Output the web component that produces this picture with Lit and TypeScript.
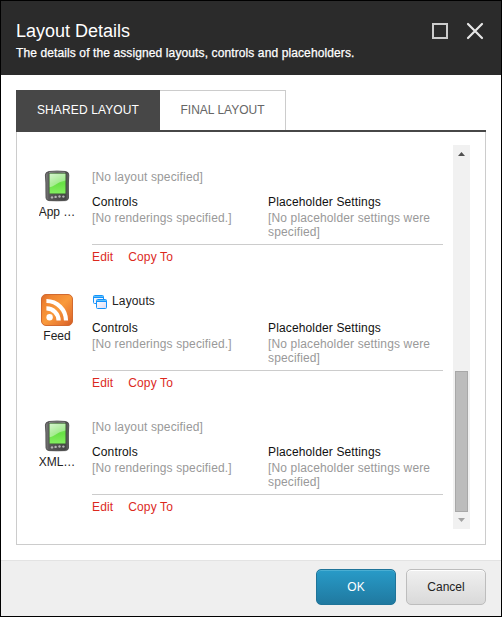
import { LitElement, html, css } from "lit";
import { customElement, property } from "lit/decorators.js";

type Device = { name: string; icon: "pda" | "feed"; layout?: string };

const devices: Device[] = [
  { name: "App …", icon: "pda" },
  { name: "Feed", icon: "feed", layout: "Layouts" },
  { name: "XML…", icon: "pda" },
];

const pdaIcon = html`<svg width="32" height="32" viewBox="0 0 32 32">
  <defs>
    <linearGradient id="body" x1="0" y1="0" x2="1" y2="0">
      <stop offset="0" stop-color="#858585" /><stop offset=".15" stop-color="#5a5a5a" />
      <stop offset=".85" stop-color="#444" /><stop offset="1" stop-color="#6a6a6a" />
    </linearGradient>
    <linearGradient id="screen" x1="0" y1="0" x2="0" y2="1">
      <stop offset="0" stop-color="#86e070" /><stop offset=".5" stop-color="#68e045" /><stop offset="1" stop-color="#84f060" />
    </linearGradient>
    <linearGradient id="shine" x1="0" y1="0" x2="1" y2="1">
      <stop offset="0" stop-color="#fff" stop-opacity=".65" /><stop offset="1" stop-color="#fff" stop-opacity=".2" />
    </linearGradient>
  </defs>
  <path d="M8 1.500Q16 .6 24.500 1.500Q28 2 27.800 5Q27.200 13 27.400 21L27.500 28Q27.300 30.400 24.500 30.600Q16 31 8 30.600Q5.300 30.400 5 28L4.900 21Q5.100 13 4.400 5Q4.400 2 8 1.500Z" fill="url(#body)" stroke="#3c3c3c" stroke-width=".8" />
  <path d="M8 2.400Q16 1.500 24.300 2.400" fill="none" stroke="#a0a0a0" stroke-width=".8" />
  <rect x="8.400" y="3.400" width="16.300" height="20.300" rx="1" fill="url(#screen)" stroke="#4a7c3c" stroke-width=".6" />
  <path d="M8.700 3.700H24.400V10.500Q18 11.500 14 15Q11 17 8.700 17.200Z" fill="url(#shine)" />
  <g fill="#b4b4b4">
    <circle cx="11" cy="27.400" r="1.200" /><circle cx="14.600" cy="26.900" r="1.200" />
    <circle cx="18.500" cy="26.500" r="1.200" /><circle cx="22.400" cy="26.600" r="1.200" />
  </g>
</svg>`;

const feedIcon = html`<svg width="32" height="32" viewBox="0 0 32 32">
  <defs>
    <linearGradient id="feed" x1="0" y1="0" x2="1" y2="1">
      <stop offset="0" stop-color="#d9692a" /><stop offset=".18" stop-color="#ef8432" />
      <stop offset=".5" stop-color="#f99a3c" /><stop offset=".82" stop-color="#e67530" /><stop offset="1" stop-color="#cf5a24" />
    </linearGradient>
  </defs>
  <rect x=".5" y=".5" width="31" height="31" rx="4.500" fill="url(#feed)" stroke="#d26a30" />
  <circle cx="8.600" cy="23.300" r="3.200" fill="#fff" />
  <path d="M5.400 14.400A12.200 12.200 0 0 1 17.600 26.600M5.400 7A19.600 19.600 0 0 1 25 26.600" fill="none" stroke="#fff" stroke-width="4.200" />
</svg>`;

const layoutsIcon = html`<svg width="16" height="16" viewBox="0 0 16 16">
  <defs>
    <linearGradient id="pane" x1="0" y1="0" x2="1" y2="1">
      <stop offset="0" stop-color="#fff" /><stop offset="1" stop-color="#dedcf4" />
    </linearGradient>
  </defs>
  <rect x="1.500" y="1.500" width="10" height="8" rx="1" fill="#f4f4fc" stroke="#1593fb" />
  <path d="M2 2.500H11" stroke="#5cc2fb" />
  <path d="M2 3.500H11" stroke="#1593fb" />
  <rect x="4.500" y="5.500" width="10" height="9" rx="1" fill="url(#pane)" stroke="#1593fb" />
  <path d="M5 6.500H14" stroke="#5cc2fb" />
  <path d="M5 7.500H14" stroke="#1593fb" />
</svg>`;

@customElement("device-row")
class DeviceRow extends LitElement {
  @property({ attribute: false }) device!: Device;

  static styles = css`
    :host { display: flex; padding-bottom: 30px; line-height: 14px; }
    svg { display: block; }
    .device { width: 36px; margin-right: 17px; display: flex; flex-direction: column; align-items: center; gap: 3px; white-space: nowrap; }
    .name { color: #222; letter-spacing: 0; }
    .details { width: 351px; }
    .layout { display: flex; align-items: flex-start; gap: 4px; margin-bottom: 11px; }
    .named { height: 16px; color: #222; }
    .muted { color: #999; }
    .columns { display: grid; grid-template-columns: 176px 175px; height: 49px; border-bottom: 1px solid #ccc; }
    .heading { color: #111; margin-bottom: 2px; }
    .actions { display: flex; gap: 15px; padding-top: 5px; color: #dc291e; }
  `;

  render() {
    const d = this.device;
    return html`
      <div class="device">
        ${d.icon === "feed" ? feedIcon : pdaIcon}
        <span class="name">${d.name}</span>
      </div>
      <div class="details">
        ${d.layout
          ? html`<div class="layout named">${layoutsIcon}<span>${d.layout}</span></div>`
          : html`<div class="layout muted">[No layout specified]</div>`}
        <div class="columns">
          <div><div class="heading">Controls</div><div class="muted">[No renderings specified.]</div></div>
          <div><div class="heading">Placeholder Settings</div><div class="muted">[No placeholder settings were specified]</div></div>
        </div>
        <div class="actions"><span>Edit</span><span>Copy To</span></div>
      </div>
    `;
  }
}

@customElement("app-root")
class AppRoot extends LitElement {
  static styles = css`
    :host {
      display: flex; flex-direction: column; box-sizing: border-box; width: 502px; height: 617px;
      border: 1px solid #000; background: #fff; overflow: hidden;
      font: 12px/14px "Liberation Sans", Arial, sans-serif; letter-spacing: 0.14px;
    }
    svg { display: block; }
    .header { height: 74px; box-sizing: border-box; flex: none; background: #2b2b2b; color: #fff; display: flex; justify-content: space-between; padding: 20px 17px 0 15px; }
    .title { font-size: 18px; line-height: 20px; letter-spacing: 0; }
    .subtitle { margin-top: 5px; letter-spacing: 0.11px; -webkit-text-stroke: 0.25px #fff; }
    .window { display: flex; gap: 17px; padding-top: 1px; }
    .main { flex: 1; min-height: 0; padding: 15px; display: flex; flex-direction: column; }
    .tabs { display: flex; flex: none; height: 40px; border-bottom: 2px solid #474747; line-height: 40px; letter-spacing: 0; }
    .tab { box-sizing: border-box; text-align: center; }
    .active { width: 144px; background: #474747; color: #fff; letter-spacing: 0.13px; }
    .idle { width: 126px; color: #666; border: 1px solid #ccc; border-width: 1px 1px 0 0; line-height: 38px; }
    .panel { flex: 1; min-height: 0; border: 1px solid #ccc; border-top: 0; display: flex; justify-content: space-between; padding: 13px 15px 15px 22px; }
    .list { padding-top: 25px; overflow: hidden; }
    .scrollbar { width: 17px; background: #f1f1f1; display: flex; flex-direction: column; align-items: center; justify-content: space-between; }
    .thumb { box-sizing: border-box; width: 13px; height: 141px; margin-top: auto; background: #bcbcbc; border: 1px solid #a8a8a8; }
    .footer { height: 56px; box-sizing: border-box; flex: none; background: #efefef; border-top: 1px solid #e3e3e3; display: flex; justify-content: flex-end; gap: 10px; padding: 8px 15px 0; }
    .button { box-sizing: border-box; width: 80px; height: 36px; border-radius: 5px; text-align: center; line-height: 34px; letter-spacing: 0; }
    .ok { color: #fff; background: linear-gradient(#289bc8, #2079a0); border: 1px solid #1f7499; box-shadow: inset 0 1px #4aaed2; }
    .cancel { color: #222; background: linear-gradient(#f0f0f0, #d9d9d9); border: 1px solid #bdbdbd; box-shadow: inset 0 1px #fff; }
  `;

  render() {
    return html`
      <div class="header">
        <div>
          <div class="title">Layout Details</div>
          <div class="subtitle">The details of the assigned layouts, controls and placeholders.</div>
        </div>
        <div class="window">
          <svg width="18" height="18" viewBox="0 0 18 18"><rect x="2" y="2" width="14" height="14" fill="none" stroke="#ccc" stroke-width="2" /></svg>
          <svg width="18" height="18" viewBox="0 0 18 18"><path d="M2 2L16 16M16 2L2 16" stroke="#e6e6e6" stroke-width="2.200" stroke-linecap="round" /></svg>
        </div>
      </div>
      <div class="main">
        <div class="tabs">
          <div class="tab active">SHARED LAYOUT</div>
          <div class="tab idle">FINAL LAYOUT</div>
        </div>
        <div class="panel">
          <div class="list">${devices.map((d) => html`<device-row .device=${d}></device-row>`)}</div>
          <div class="scrollbar">
            <svg width="17" height="17" viewBox="0 0 17 17"><path d="M5 11L8.500 7L12 11Z" fill="#505050" /></svg>
            <div class="thumb"></div>
            <svg width="17" height="17" viewBox="0 0 17 17"><path d="M5 6L8.500 10L12 6Z" fill="#a3a3a3" /></svg>
          </div>
        </div>
      </div>
      <div class="footer">
        <div class="button ok">OK</div>
        <div class="button cancel">Cancel</div>
      </div>
    `;
  }
}
